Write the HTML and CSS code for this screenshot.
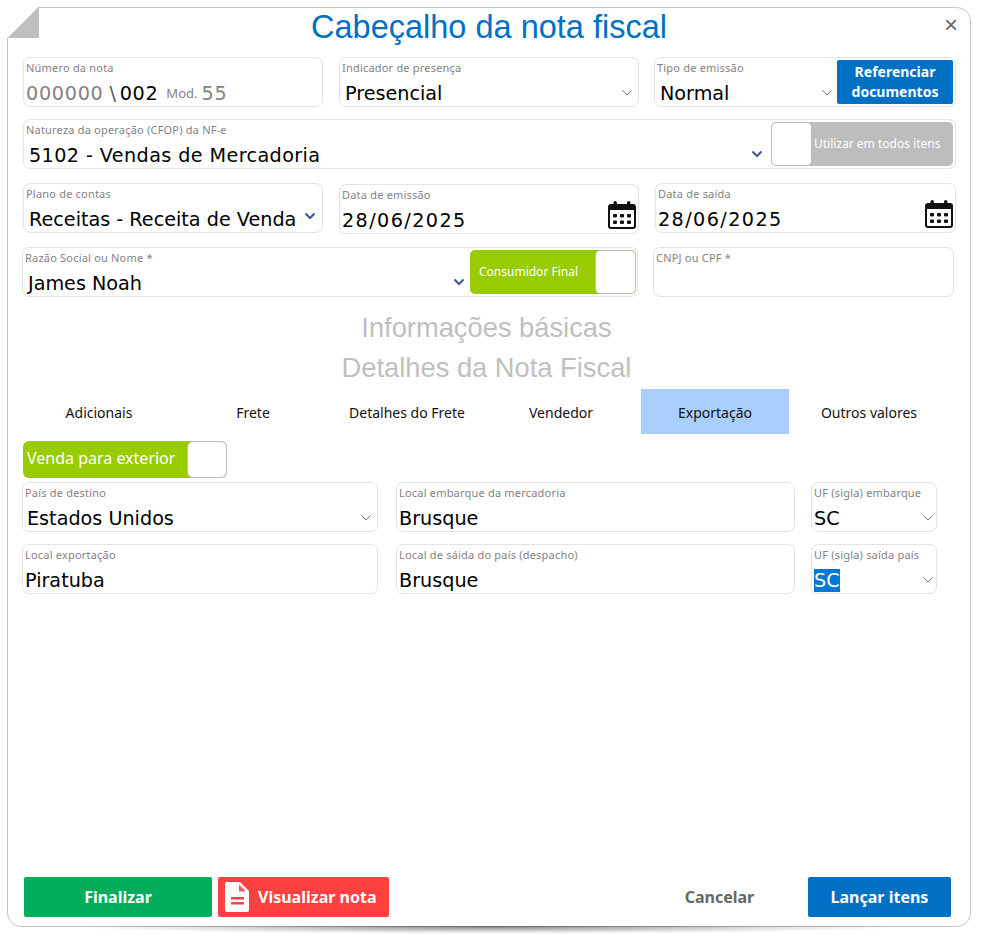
FILE: index.html
```html
<!DOCTYPE html>
<html lang="pt-BR">

<head>
  <meta charset="UTF-8">
  <title>Cabeçalho da nota fiscal</title>
  <link rel="stylesheet" href="styles.css">
</head>

<body>
  <svg class="defs" width="0" height="0">
    <symbol id="chev" viewBox="0 0 12 8">
      <path d="M1.5 1.500 6 6l4.500-4.500" fill="none" stroke="#777" stroke-width="1" />
    </symbol>
    <symbol id="chev-bold" viewBox="0 0 12 8">
      <path d="M1.500 1.500 6 6l4.500-4.500" fill="none" stroke="#3f5596" stroke-width="2" />
    </symbol>
    <symbol id="cal" viewBox="0 0 28 28">
      <path d="M3 4h22a2 2 0 0 1 2 2v19a2 2 0 0 1-2 2H3a2 2 0 0 1-2-2V6a2 2 0 0 1 2-2z" fill="#fff" stroke="#111" stroke-width="2" />
      <path d="M1 5h26v4H1z" fill="#111" />
      <rect x="5.500" y="0" width="3.400" height="7" rx="1.700" fill="#111" />
      <rect x="19" y="0" width="3.400" height="7" rx="1.700" fill="#111" />
      <g fill="#111">
        <rect x="5" y="13" width="4" height="3.400" rx=".8" />
        <rect x="12" y="13" width="4" height="3.400" rx=".8" />
        <rect x="19" y="13" width="4" height="3.400" rx=".8" />
        <rect x="5" y="19.500" width="4" height="3.400" rx=".8" />
        <rect x="12" y="19.500" width="4" height="3.400" rx=".8" />
        <rect x="19" y="19.500" width="4" height="3.400" rx=".8" />
      </g>
    </symbol>
  </svg>

  <div class="panel">
    <div class="fold"></div>
    <button type="button" class="close">×</button>
    <h1 class="title">Cabeçalho da nota fiscal</h1>

    <div class="row">
      <div class="field w300">
        <span class="label">Número da nota</span>
        <div class="value number">
          <span class="muted">000000</span><span class="slash">\</span><span>002</span><small>Mod.</small><span class="muted">55</span>
        </div>
      </div>
      <div class="field w300">
        <span class="label">Indicador de presença</span>
        <div class="value"><span class="text pad3">Presencial</span><svg class="chev"><use href="#chev" /></svg></div>
      </div>
      <div class="field field-split w302 pull">
        <div class="field-main">
          <span class="label">Tipo de emissão</span>
          <div class="value"><span class="text pad3">Normal</span><svg class="chev m1"><use href="#chev" /></svg></div>
        </div>
        <button type="button" class="ref-btn">Referenciar documentos</button>
      </div>
    </div>

    <div class="row row-next">
      <div class="field field-split w933">
        <div class="field-main">
          <span class="label">Natureza da operação (CFOP) da NF-e</span>
          <div class="value"><span class="text pad3 wide">5102 - Vendas de Mercadoria</span><svg class="chev bold m5"><use href="#chev-bold" /></svg></div>
        </div>
        <div class="toggle toggle-off"><span class="knob"></span><span class="toggle-text">Utilizar em todos itens</span></div>
      </div>
    </div>

    <div class="row row-next2">
      <div class="field w300">
        <span class="label">Plano de contas</span>
        <div class="value"><span class="text pad3">Receitas - Receita de Venda</span><svg class="chev bold high"><use href="#chev-bold" /></svg></div>
      </div>
      <div class="field w300 nudge">
        <span class="label">Data de emissão</span>
        <div class="value"><span class="text date">28/06/2025</span><svg class="cal"><use href="#cal" /></svg></div>
      </div>
      <div class="field w301">
        <span class="label">Data de saída</span>
        <div class="value"><span class="text date">28/06/2025</span><svg class="cal"><use href="#cal" /></svg></div>
      </div>
    </div>

    <div class="row row-next2 row-client">
      <div class="field field-split w616">
        <div class="field-main">
          <span class="label">Razão Social ou Nome *</span>
          <div class="value"><span class="text pad3">James Noah</span><svg class="chev bold m2"><use href="#chev-bold" /></svg></div>
        </div>
        <div class="toggle toggle-on"><span class="toggle-text">Consumidor Final</span><span class="knob"></span></div>
      </div>
      <div class="field w301">
        <span class="label">CNPJ ou CPF *</span>
      </div>
    </div>

    <h2 class="section first">Informações básicas</h2>
    <h2 class="section">Detalhes da Nota Fiscal</h2>

    <div class="tabs">
      <a class="tab">Adicionais</a>
      <a class="tab">Frete</a>
      <a class="tab">Detalhes do Frete</a>
      <a class="tab">Vendedor</a>
      <a class="tab active">Exportação</a>
      <a class="tab">Outros valores</a>
    </div>

    <div class="switch"><span class="switch-text">Venda para exterior</span><span class="switch-knob"></span></div>

    <div class="row row-export first-export">
      <div class="field w356">
        <span class="label">País de destino</span>
        <div class="value"><span class="text pad2">Estados Unidos</span><svg class="chev"><use href="#chev" /></svg></div>
      </div>
      <div class="field w399">
        <span class="label">Local embarque da mercadoria</span>
        <div class="value"><span class="text">Brusque</span></div>
      </div>
      <div class="field w126">
        <span class="label">UF (sigla) embarque</span>
        <div class="value"><span class="text">SC</span><svg class="chev m0"><use href="#chev" /></svg></div>
      </div>
    </div>

    <div class="row row-export row-next">
      <div class="field w356">
        <span class="label">Local exportação</span>
        <div class="value"><span class="text">Piratuba</span></div>
      </div>
      <div class="field w399">
        <span class="label">Local de sáida do país (despacho)</span>
        <div class="value"><span class="text">Brusque</span></div>
      </div>
      <div class="field w126">
        <span class="label">UF (sigla) saída país</span>
        <div class="value"><span class="text"><span class="selected">SC</span></span><svg class="chev m0"><use href="#chev" /></svg></div>
      </div>
    </div>

    <div class="actions">
      <button type="button" class="btn btn-green">Finalizar</button>
      <button type="button" class="btn btn-red">
        <svg class="doc" viewBox="0 0 24 30">
          <path d="M2 0h13l9 9v19a2 2 0 0 1-2 2H2a2 2 0 0 1-2-2V2a2 2 0 0 1 2-2z" fill="#fff" />
          <path d="M14 2.500v7h7z" fill="#ff5a5a" />
          <path d="M6 15h13v2.500H6zM6 20h13v2.500H6z" fill="#ff4040" />
        </svg>
        Visualizar nota
      </button>
      <button type="button" class="btn btn-link">Cancelar</button>
      <button type="button" class="btn btn-blue">Lançar itens</button>
    </div>
  </div>
</body>

</html>
```

FILE: styles.css
```css
* {
  padding: 0;
  margin: 0;
  box-sizing: border-box;
}

body {
  padding: 7px;
  background-color: #fff;
  font-family: "Noto Sans", "Liberation Sans", sans-serif;
  overflow: hidden;
}

.defs {
  display: block;
}

.panel {
  position: relative;
  display: flex;
  flex-direction: column;
  width: 964px;
  height: 920px;
  padding: 0 15px 9px;
  background-color: #fff;
  border: 1px solid #c4c4c4;
  border-radius: 0 14px 14px 14px;
}

/* sombra embaixo do painel */
.panel::after {
  content: "";
  position: absolute;
  top: 100%;
  left: 60px;
  right: 60px;
  height: 8px;
  background: radial-gradient(ellipse 50% 100% at 50% 0, rgba(0, 0, 0, .5), rgba(0, 0, 0, .12) 70%, transparent);
}

.fold {
  position: absolute;
  top: -1px;
  left: -1px;
  width: 32px;
  height: 31px;
  background: linear-gradient(135deg, #fff 50%, #bfbfbf 50%);
}

.close {
  position: absolute;
  top: 6px;
  right: 10px;
  width: 18px;
  height: 22px;
  border: none;
  background: none;
  color: #666;
  font-family: "Liberation Sans", sans-serif;
  font-size: 24px;
  line-height: 22px;
}

.title {
  height: 49px;
  color: #0070c4;
  font-family: "Liberation Sans", sans-serif;
  font-size: 32.500px;
  font-weight: normal;
  line-height: 38px;
  text-align: center;
}

.row {
  display: flex;
  gap: 16px;
}

.row-next {
  margin-top: 12px;
}

.row-next2 {
  margin-top: 14px;
}

.row-client {
  gap: 15px;
  margin-left: -1px;
}

.row-export {
  gap: 18px;
  margin-left: -1px;
}

.first-export {
  margin-top: 4px;
}

.w300 {
  width: 300px;
}

.w301 {
  width: 301px;
}

.w302 {
  width: 302px;
}

.w933 {
  width: 933px;
}

.w616 {
  width: 616px;
}

.w356 {
  width: 356px;
}

.w399 {
  width: 399px;
  margin-right: -2px;
}

.w126 {
  width: 126px;
}

.pull {
  margin-left: -1px;
}

.nudge {
  position: relative;
  top: 1px;
}

.field {
  flex: none;
  height: 50px;
  padding: 2px 2px 0;
  background-color: #fff;
  border: 1px solid #e3e3e3;
  border-radius: 7px;
}

.field-split {
  display: flex;
  padding: 2px;
  gap: 3px;
}

.field-main {
  flex: 1;
  min-width: 0;
}

.label {
  display: block;
  height: 15px;
  color: #857f85;
  font-size: 11px;
  line-height: 15px;
  letter-spacing: .2px;
  white-space: nowrap;
}

.value {
  display: flex;
  align-items: center;
  height: 30px;
  color: #000;
  font-family: "DejaVu Sans", sans-serif;
  font-size: 19.200px;
}

.text {
  flex: 1;
  padding-top: 6px;
  white-space: nowrap;
}

.pad3 {
  padding-left: 3px;
}

.pad2 {
  padding-left: 2px;
}

.wide {
  letter-spacing: .4px;
}

.date {
  letter-spacing: 1.400px;
}

.selected {
  background-color: #0078d7;
  color: #fff;
}

.chev {
  width: 12px;
  height: 8px;
  flex: none;
  margin: 6px 3px 0 0;
}

.chev.bold {
  margin-top: 4px;
}

.chev.high {
  margin-top: 0;
  margin-right: 4px;
}

.chev.m0 {
  margin-right: 0;
}

.chev.m1 {
  margin-right: 1px;
}

.chev.m2 {
  margin-right: 2px;
}

.chev.m5 {
  margin-right: 5px;
}

.cal {
  width: 28px;
  height: 28px;
  flex: none;
  align-self: flex-start;
  margin-top: -1px;
}

.number span,
.number small {
  padding-top: 6px;
}

.number {
  letter-spacing: .7px;
}

.muted {
  color: #857f85;
}

.slash {
  margin: 0 3px 0 6px;
  color: #555;
}

.number small {
  margin: 0 4px 0 8px;
  color: #857f85;
  font-family: "Noto Sans", sans-serif;
  font-size: 13px;
  letter-spacing: 0;
}

.ref-btn {
  width: 116px;
  flex: none;
  border: none;
  border-radius: 2px;
  background-color: #0070c4;
  color: #fff;
  font-family: "Noto Sans", sans-serif;
  font-size: 14px;
  font-weight: bold;
  line-height: 20px;
}

.toggle {
  display: flex;
  flex: none;
  align-items: stretch;
  height: 44px;
  border-radius: 5px;
  color: #fff;
  font-size: 12px;
  overflow: hidden;
}

.toggle-off {
  width: 182px;
  background-color: #bdbdbd;
}

.toggle-on {
  width: 166px;
  margin-right: -1px;
  background-color: #99cc00;
  justify-content: space-between;
}

.knob {
  width: 41px;
  flex: none;
  background-color: #fff;
  border: 1px solid #bdbdbd;
  border-radius: 5px;
}

.toggle-text {
  align-self: center;
  margin-bottom: 2px;
  padding: 0 2px;
  white-space: nowrap;
}

.toggle-on .toggle-text {
  padding-left: 9px;
}

.section {
  height: 40px;
  color: #bfbfbf;
  font-family: "Liberation Sans", sans-serif;
  font-size: 27.300px;
  font-weight: normal;
  line-height: 40px;
  text-align: center;
  margin-left: -5px;
}

.section.first {
  margin-top: 11px;
}

.tabs {
  display: flex;
  gap: 6px;
  margin: 1px 0 0 2px;
}

.tab {
  width: 148px;
  height: 45px;
  padding-top: 14px;
  color: #111;
  font-size: 14px;
  line-height: 20px;
  text-align: center;
}

.tab.active {
  background-color: #a9cfff;
}

.switch {
  display: flex;
  justify-content: space-between;
  width: 204px;
  height: 37px;
  margin-top: 7px;
  background-color: #99cc00;
  border-radius: 6px;
}

.switch-text {
  padding-left: 4px;
  color: #fff;
  font-size: 16px;
  line-height: 34px;
  white-space: nowrap;
}

.switch-knob {
  width: 40px;
  background-color: #fff;
  border: 1px solid #bdbdbd;
  border-radius: 6px;
}

.actions {
  display: flex;
  gap: 6px;
  height: 40px;
  margin-top: auto;
  padding-left: 1px;
}

.btn {
  display: flex;
  flex: none;
  justify-content: center;
  align-items: center;
  gap: 9px;
  height: 40px;
  border: none;
  border-radius: 2px;
  color: #fff;
  font-family: "Noto Sans", sans-serif;
  font-size: 16px;
  font-weight: bold;
}

.btn-green {
  width: 188px;
  background-color: #00ad5a;
}

.btn-red {
  width: 171px;
  padding-left: 7px;
  justify-content: flex-start;
  background-color: #ff4040;
}

.btn-link {
  width: 143px;
  margin-left: 253px;
  background: none;
  color: #666;
}

.btn-blue {
  width: 143px;
  margin-left: 11px;
  background-color: #0070c4;
}

.doc {
  width: 24px;
  height: 30px;
  flex: none;
}
```
